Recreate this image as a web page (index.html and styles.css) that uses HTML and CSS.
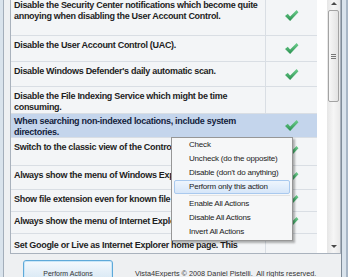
FILE: index.html
```html
<!DOCTYPE html>
<html>
<head>
<meta charset="utf-8">
<link rel="stylesheet" href="styles.css">
</head>
<body>
<div class="window">
  <div class="client">
    <div class="list">
      <div class="rows">
        <div class="row">
          <div class="desc">Disable the Security Center notifications which become quite<br>annoying when disabling the User Account Control.</div>
          <div class="state"><svg class="tick" viewBox="0 0 16 14"><defs><linearGradient id="g" x1="0" y1="0" x2="0" y2="1"><stop offset="0" stop-color="#6fcf8f"/><stop offset="1" stop-color="#2a9150"/></linearGradient></defs><polygon points="1,7.5 4,5 6.5,8 13.5,1 15.5,3.5 6.5,13" fill="url(#g)"/></svg></div>
        </div>
        <div class="row">
          <div class="desc">Disable the User Account Control (UAC).</div>
          <div class="state"><svg class="tick" viewBox="0 0 16 14"><polygon points="1,7.5 4,5 6.5,8 13.5,1 15.5,3.5 6.5,13" fill="url(#g)"/></svg></div>
        </div>
        <div class="row">
          <div class="desc">Disable Windows Defender's daily automatic scan.</div>
          <div class="state"><svg class="tick" viewBox="0 0 16 14"><polygon points="1,7.5 4,5 6.5,8 13.5,1 15.5,3.5 6.5,13" fill="url(#g)"/></svg></div>
        </div>
        <div class="row">
          <div class="desc">Disable the File Indexing Service which might be time<br>consuming.</div>
          <div class="state"></div>
        </div>
        <div class="row selected">
          <div class="desc">When searching non-indexed locations, include system<br>directories.</div>
          <div class="state"><svg class="tick" viewBox="0 0 16 14"><polygon points="1,7.5 4,5 6.5,8 13.5,1 15.5,3.5 6.5,13" fill="url(#g)"/></svg></div>
        </div>
        <div class="row">
          <div class="desc">Switch to the classic view of the Control Panel.</div>
          <div class="state"><svg class="tick" viewBox="0 0 16 14"><polygon points="1,7.5 4,5 6.5,8 13.5,1 15.5,3.5 6.5,13" fill="url(#g)"/></svg></div>
        </div>
        <div class="row">
          <div class="desc">Always show the menu of Windows Explorer.</div>
          <div class="state"><svg class="tick" viewBox="0 0 16 14"><polygon points="1,7.5 4,5 6.5,8 13.5,1 15.5,3.5 6.5,13" fill="url(#g)"/></svg></div>
        </div>
        <div class="row">
          <div class="desc">Show file extension even for known file types.</div>
          <div class="state"><svg class="tick" viewBox="0 0 16 14"><polygon points="1,7.5 4,5 6.5,8 13.5,1 15.5,3.5 6.5,13" fill="url(#g)"/></svg></div>
        </div>
        <div class="row">
          <div class="desc">Always show the menu of Internet Explorer.</div>
          <div class="state"><svg class="tick" viewBox="0 0 16 14"><polygon points="1,7.5 4,5 6.5,8 13.5,1 15.5,3.5 6.5,13" fill="url(#g)"/></svg></div>
        </div>
        <div class="row last">
          <div class="desc">Set Google or Live as Internet Explorer home page. This</div>
          <div class="state"></div>
        </div>
      </div>
      <div class="blank"></div>
      <div class="vscroll">
        <div class="arrow up"></div>
        <div class="track"><div class="thumb"><div class="grip"></div></div></div>
        <div class="arrow down"></div>
      </div>
    </div>
    <div class="footer">
      <button class="btn">Perform Actions</button>
      <span class="copy">Vista4Experts © 2008 Daniel Pistelli.&nbsp; All rights reserved.</span>
    </div>
  </div>
  <ul class="menu">
    <li>Check</li>
    <li>Uncheck (do the opposite)</li>
    <li>Disable (don't do anything)</li>
    <li class="hot">Perform only this action</li>
    <li class="sep"></li>
    <li>Enable All Actions</li>
    <li>Disable All Actions</li>
    <li>Invert All Actions</li>
  </ul>
</div>
</body>
</html>
```

FILE: styles.css
```css
html, body {
  margin: 0;
  padding: 0;
}
body {
  width: 348px;
  height: 277px;
  overflow: hidden;
  font-family: "Liberation Sans", Arial, sans-serif;
}
.window {
  position: relative;
  height: 277px;
  display: flex;
  padding: 0 6px 0 3px;
  background: #d9e3ec;
  box-shadow: inset -2px 0 0 #a7b6c6;
}
.client {
  flex: 1;
  display: flex;
  flex-direction: column;
  border-left: 1px solid #a3aeba;
  border-right: 1px solid #7f8c99;
  background: #eef0f2;
  padding-left: 6px;
  min-width: 0;
}
.list {
  flex: none;
  height: 259px;
  margin-top: -5px;
  box-sizing: border-box;
  border: 1px solid #a9b2bd;
  display: flex;
  background: #fff;
  overflow: hidden;
}
.rows {
  width: 306px;
  flex: none;
  display: flex;
  flex-direction: column;
  overflow: hidden;
}
.row {
  flex: none;
  display: flex;
  box-sizing: border-box;
  border-bottom: 1px solid #d9dee4;
  background: #f3f5f7;
}
.row:nth-child(1) { height: 40px; }
.row:nth-child(2) { height: 26px; }
.row:nth-child(3) { height: 25px; }
.row:nth-child(4) { height: 27px; }
.row:nth-child(5) { height: 24px; }
.row:nth-child(6) { height: 28px; }
.row:nth-child(7) { height: 24px; }
.row:nth-child(8) { height: 22px; }
.row:nth-child(9) { height: 22px; }
.row.last { flex: 1; border-bottom: 0; }
.row.selected {
  background: #c4d5ec;
}
.desc {
  width: 254px;
  flex: none;
  box-sizing: border-box;
  padding: 4px 0 0 3px;
  font-weight: bold;
  font-size: 9px;
  line-height: 11px;
  letter-spacing: -0.3px;
  color: #1e1e1e;
  white-space: nowrap;
  overflow: hidden;
}
.row.selected .desc {
  padding-top: 2px;
  color: #13223c;
}
.row.last .desc { padding-top: 6px; }
.state {
  flex: 1;
  border-left: 1px solid #d9dee4;
  display: flex;
  align-items: center;
  justify-content: center;
}
.row.selected .state { border-left-color: #c4d5ec; }
.tick {
  width: 15px;
  height: 13px;
}
.blank {
  width: 10px;
  flex: none;
  background: #fff;
}
.vscroll {
  width: 13px;
  flex: none;
  display: flex;
  flex-direction: column;
  background: linear-gradient(to right, #e6e6e6, #f6f6f6 50%, #e9e9e9);
}
.arrow {
  height: 14px;
  flex: none;
  display: flex;
  align-items: center;
  justify-content: center;
}
.arrow::before {
  content: "";
  border-left: 3px solid transparent;
  border-right: 3px solid transparent;
}
.arrow.up::before { border-bottom: 3px solid #4a4a4a; }
.arrow.down::before { border-top: 3px solid #4a4a4a; }
.track {
  flex: 1;
  display: flex;
  flex-direction: column;
}
.thumb {
  height: 90px;
  margin: 0 1px;
  border: 1px solid #a3a3a3;
  border-radius: 2px;
  background: linear-gradient(to right, #f7f7f7, #e3e3e3);
  display: flex;
  align-items: center;
  justify-content: center;
}
.grip {
  width: 5px;
  height: 5px;
  background: repeating-linear-gradient(to bottom, #777 0 1px, transparent 1px 2px);
}
.footer {
  flex: 1;
  display: flex;
  align-items: flex-start;
  padding: 6px 0 0 13px;
  gap: 22px;
}
.btn {
  width: 90px;
  height: 23px;
  padding: 4px 0 0;
  margin: 0;
  box-sizing: border-box;
  border: 1px solid #5ea9d9;
  border-radius: 3px;
  background: linear-gradient(#f4f9fd, #e4eff8 50%, #d4e6f3);
  box-shadow: inset 0 0 0 1px #c9e6f8;
  font-family: "Liberation Sans", Arial, sans-serif;
  font-size: 7px;
  color: #333;
}
.copy {
  padding-top: 9px;
  font-size: 7.25px;
  line-height: 9px;
  color: #333;
  white-space: nowrap;
}
.menu {
  position: absolute;
  left: 171px;
  top: 137px;
  width: 122px;
  box-sizing: border-box;
  margin: 0;
  padding: 0 0 1px;
  list-style: none;
  background: #f6f7f8;
  border: 1px solid #979797;
  box-shadow: 2px 2px 2px rgba(0, 0, 0, 0.3);
  font-size: 8px;
  color: #222;
}
.menu li {
  height: 14px;
  line-height: 14px;
  padding-left: 17px;
  letter-spacing: -0.2px;
  white-space: nowrap;
}
.menu li.hot {
  height: 12px;
  line-height: 12px;
  margin: 0 2px;
  padding-left: 14px;
  border: 1px solid #a9c9ee;
  border-radius: 2px;
  background: linear-gradient(#eef5fd, #d6e6f9);
}
.menu li.sep {
  height: 1px;
  margin: 1px 2px 1px 17px;
  padding: 0;
  background: #e2e3e4;
}
```
